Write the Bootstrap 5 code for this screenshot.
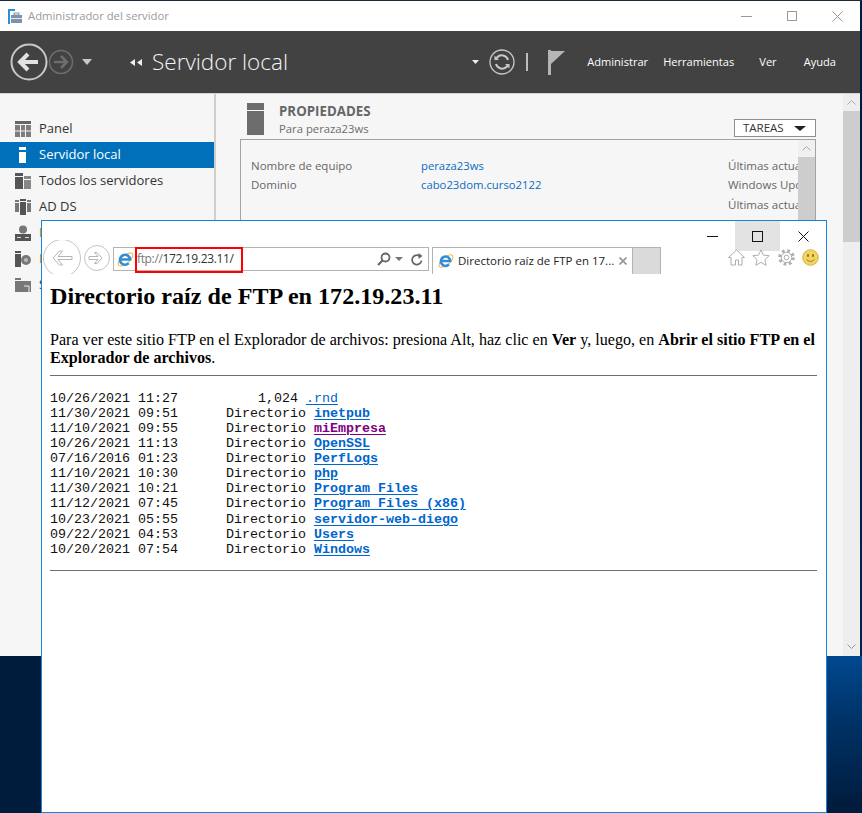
<!DOCTYPE html>
<html lang="es">
<head>
    <meta charset="UTF-8">
    <meta name="viewport" content="width=device-width, initial-scale=1.0">
    <title>Directorio raíz de FTP en 172.19.23.11</title>
    <link href="https://cdn.jsdelivr.net/npm/bootstrap@5.3.2/dist/css/bootstrap.min.css" rel="stylesheet">
    <style>
        html, body { height: 100%; }
        body { width: 862px; height: 813px; overflow: hidden; position: relative; font-family: "Open Sans", "Liberation Sans", sans-serif; background: linear-gradient(100deg, #001c3c 0%, #001c3c 88%, #00274f 100%); border-top: 1px solid #1c2a38; }
        .escritorio-luz { position: absolute; left: 827px; top: 655px; width: 35px; height: 158px; background: linear-gradient(180deg, #00498f 0%, #00356c 35%, #001a3a 100%); }

        /* ventana de atrás */
        .win-srv { position: absolute; left: 0; top: 0; width: 860px; height: 655px; background: #f6f6f6; }
        .srv-titulo { height: 30px; background: #fff; color: #9a9a9a; font-size: 11.3px; padding-left: 8px; gap: 6px; }
        .srv-ctrl { gap: 35px; padding-right: 17px; }
        .srv-barra { height: 62px; background: #424242; color: #fff; position: relative; }
        .srv-nav { padding-left: 10px; width: 130px; flex: none; }
        .srv-h { font-size: 22.5px; font-weight: 300; margin-left: 9px; color: #f5f5f5; }
        .srv-menu { font-size: 11.1px; color: #fff; padding-right: 24px; }
        .srv-menu span { white-space: nowrap; }
        .srv-main { height: 562px; border-top: 1px solid #d4d4d4; }
        .srv-lat { width: 216px; flex: none; padding-top: 22px; border-right: 2px solid #cfcfcf; }
        .srv-item { height: 26px; padding-left: 15px; gap: 8px; font-size: 13px; color: #333; padding-right: 2px; }
        .srv-item.activo { background: #0070bb; color: #fff; }
        .srv-naranja { color: #c8751a; }
        .srv-cont { padding: 0 27px 0 24px; min-width: 0; }
        .srv-cab { height: 45px; padding-left: 7px; }
        .srv-cab-txt { margin-left: 15px; padding-top: 8px; font-size: 11.3px; line-height: 18px; color: #6d6d6d; }
        .srv-cab-txt b { font-size: 13.3px; color: #666; display: block; }
        .srv-tareas { border: 1px solid #8f8f8f; width: 82px; height: 18px; font-size: 11.5px; color: #333; background: #fff; margin-top: 25px; padding: 0 9px 0 8px; }
        .flecha-neg { width: 0; height: 0; border-left: 6px solid transparent; border-right: 6px solid transparent; border-top: 5px solid #222; }
        .srv-panel { border: 1px solid #a3a3a3; border-bottom: 0; height: 517px; overflow: hidden; }
        .srv-props { padding: 16px 0 0 10px; font-size: 11.5px; line-height: 19.4px; color: #666; min-width: 0; }
        .srv-props a { color: #0b6cbf; text-decoration: none; font-size: 11.3px; }
        .srv-c1 { width: 170px; flex: none; }
        .srv-c2 { width: 307px; flex: none; }
        .srv-c3 { white-space: nowrap; overflow: hidden; flex: 1 1 0; min-width: 0; }
        .barra-v { width: 17px; flex: none; background: #f0f0f0; }
        .barra-btn { height: 17px; }
        .barra-thumb { background: #cdcdcd; }
        .barra-v.ext { background: #eeeeee; }
        .barra-v.ext .barra-hueco { height: 131px; }
        .barra-v.ext .barra-pie { padding-bottom: 3px; }

        /* ventana del explorador */
        .win-ie { position: absolute; left: 41px; top: 219px; width: 786px; height: 593px; background: #fff; border: 1px solid #1883d7; color: #000; }
        .ie-ctrl { height: 26px; flex: none; }
        .ie-ctrl-btn { width: 45px; height: 30px; }
        .ie-ctrl-btn.cerrar { width: 46px; }
        .ie-ctrl-btn.foco { background: #e3e3e3; }
        .ie-tool { height: 27px; flex: none; padding-right: 6px; position: relative; }
        .ie-nav { width: 71px; flex: none; height: 34px; margin-top: -7px; }
        .ie-nav svg { display: block; }
        .ie-dir { width: 316px; flex: none; height: 24px; border: 1px solid #b3b3b3; align-self: flex-start; padding-left: 3px; padding-right: 5px; }
        .ie-url { font-size: 12px; color: #777; margin-left: 3px; letter-spacing: -.35px; }
        .ie-url b { font-weight: 400; color: #333; }
        .ie-rojo { position: absolute; left: 93px; top: 0; width: 108px; height: 26px; border: 2px solid #f00; }
        .ie-tab { width: 201px; flex: none; height: 27px; border: 1px solid #b3b3b3; border-bottom: 0; margin-left: 3px; padding-left: 5px; padding-right: 5px; font-size: 11.5px; color: #222; white-space: nowrap; }
        .ie-tab-nueva { width: 28px; flex: none; height: 27px; background: #dadada; border: 1px solid #b3b3b3; border-left: 0; border-bottom: 0; }
        .ie-iconos { gap: 7.5px; padding-right: 1px; margin-top: 2px; }
        .ie-pag { padding: 0 9px 0 8px; font-family: "Liberation Serif", "Times New Roman", serif; }
        .ie-pag h1 { font-size: 24.12px; font-weight: 700; line-height: 28px; margin: 8px 0 21px; }
        .ie-pag p { font-size: 16.1px; line-height: 18px; margin: 0 0 8px; }
        .ie-pag hr { margin: 0; border: 0; border-top: 1px solid #6f6f6f; opacity: 1; }
        .ftp-lista { font-family: "Liberation Mono", "Courier New", monospace; font-size: 13.33px; line-height: 15px; margin: 15px 0 13px; color: #111; overflow: visible; }
        .ftp-ln { display: block; height: 15px; white-space: pre; }
        .ftp-ln.alto { margin-top: 1px; }
        .ftp-lista a { color: #0066cc; text-decoration: underline; text-underline-offset: 2px; }
        .ftp-lista a.dir { font-weight: 700; }
        .ftp-lista a.visto { color: #800080; }
    </style>
</head>
<body>

<div class="escritorio-luz"></div>

<!-- ADMINISTRADOR DEL SERVIDOR -->
<div class="win-srv d-flex flex-column">
    <div class="srv-titulo d-flex align-items-center flex-shrink-0">
        <svg width="14" height="15" viewBox="0 0 14 15"><rect x="0" y="0" width="7" height="2" fill="#2a8fdc"/><rect x="0" y="0" width="2" height="15" fill="#2a8fdc"/><rect x="3" y="6" width="11" height="8" fill="#7d94a8"/><rect x="6" y="4" width="5" height="2" fill="none" stroke="#7d94a8"/><rect x="3" y="9" width="11" height="1" fill="#dfe6ec"/></svg>
        <span>Administrador del servidor</span>
        <div class="srv-ctrl d-flex align-items-center ms-auto">
            <svg width="11" height="11" viewBox="0 0 11 11"><path d="M0 5.500h11" stroke="#999"/></svg>
            <svg width="10" height="10" viewBox="0 0 10 10"><rect x=".5" y=".5" width="9" height="9" fill="none" stroke="#999"/></svg>
            <svg width="11" height="11" viewBox="0 0 11 11"><path d="M.5.500l10 10M10.500.500l-10 10" stroke="#999"/></svg>
        </div>
    </div>

    <div class="srv-barra d-flex align-items-center flex-shrink-0">
        <div class="srv-nav d-flex align-items-center">
            <svg width="38" height="38" viewBox="0 0 38 38"><circle cx="19" cy="19" r="17.500" fill="none" stroke="#c8c8c8" stroke-width="2"/><path d="M28 19H11M18 11l-8 8 8 8" fill="none" stroke="#e2e2e2" stroke-width="4"/></svg>
            <svg width="26" height="26" viewBox="0 0 26 26"><circle cx="13" cy="13" r="11.500" fill="none" stroke="#6e6e6e" stroke-width="1.500"/><path d="M6 13h12M13 7l6 6-6 6" fill="none" stroke="#6e6e6e" stroke-width="2.500"/></svg>
            <svg class="ms-2" width="10" height="6" viewBox="0 0 10 6"><path d="M0 0h10L5 6z" fill="#c8c8c8"/></svg>
        </div>
        <svg width="13" height="7" viewBox="0 0 13 7"><path d="M5 0v7L0 3.500zM12 0v7L7 3.500z" fill="#eee"/></svg>
        <span class="srv-h">Servidor local</span>
        <div class="d-flex align-items-center ms-auto">
            <svg width="7" height="4" viewBox="0 0 7 4"><path d="M0 0h7L3.500 4z" fill="#eee"/></svg>
            <svg style="margin-left:10px" width="26" height="26" viewBox="0 0 26 26"><circle cx="13" cy="13" r="12" fill="none" stroke="#c9c9c9" stroke-width="1.300"/><path d="M19 11a6.500 6.500 0 0 0-11-2.500L6.500 10M7 15a6.500 6.500 0 0 0 11 2.500l1.500-1.500" fill="none" stroke="#c9c9c9" stroke-width="2"/><path d="M5.500 6.500v4.500h4.500zM20.500 19.500V15H16z" fill="#c9c9c9"/></svg>
            <svg style="margin-left:11px" width="2" height="18" viewBox="0 0 2 18"><rect width="2" height="18" fill="#bdbdbd"/></svg>
            <svg style="margin-left:20px" width="17" height="25" viewBox="0 0 17 25"><rect width="3" height="25" fill="#b5b5b5"/><path d="M3 1h14L3 14z" fill="#b5b5b5"/></svg>
            <div class="srv-menu d-flex align-items-center">
                <span style="margin-left:22px">Administrar</span>
                <span style="margin-left:15px">Herramientas</span>
                <span style="margin-left:25px">Ver</span>
                <span style="margin-left:27px">Ayuda</span>
            </div>
        </div>
    </div>

    <div class="srv-main d-flex flex-grow-1">
        <div class="srv-lat">
            <div class="srv-item d-flex align-items-center">
                <svg width="16" height="16" viewBox="0 0 16 16"><path fill="#666" d="M0 0h16v3H0z"/><path fill="#7d7d7d" d="M0 4h5v5.500H0zM6 4h4v5.500H6zM11 4h5v5.500h-5zM0 10.500h5V16H0zM6 10.500h4V16H6zM11 10.500h5V16h-5z"/></svg>
                <span>Panel</span>
            </div>
            <div class="srv-item activo d-flex align-items-center">
                <svg width="16" height="16" viewBox="0 0 16 16"><path fill="#fff" d="M4 0h7v3H4zM4 5h7v11H4z"/></svg>
                <span>Servidor local</span>
            </div>
            <div class="srv-item d-flex align-items-center">
                <svg width="16" height="16" viewBox="0 0 16 16"><path fill="#555" d="M0 0h8v3H0zM0 4h8v12H0z"/><path fill="#888" d="M9 3h7v3H9zM9 7h7v9H9z"/></svg>
                <span>Todos los servidores</span>
            </div>
            <div class="srv-item d-flex align-items-center">
                <svg width="16" height="16" viewBox="0 0 16 16"><path fill="#777" d="M0 1h4v2H0zM0 4h4v9H0zM12 1h4v2h-4zM12 4h4v9h-4z"/><path fill="#555" d="M5 0h6v2H5zM5 3h6v13H5z"/></svg>
                <span>AD DS</span>
            </div>
            <div class="srv-item d-flex align-items-center">
                <svg width="16" height="16" viewBox="0 0 16 16"><circle cx="8" cy="4.500" r="4" fill="#777"/><path fill="#555" d="M0 9h16v7H0z"/><path fill="#ddd" d="M2 12h4v1H2zM10 12h4v1h-4z"/></svg>
                <span class="srv-naranja">DNS</span>
            </div>
            <div class="srv-item d-flex align-items-center">
                <svg width="16" height="16" viewBox="0 0 16 16"><path fill="#555" d="M0 0h6v2H0zM0 3h6v13H0z"/><circle cx="11" cy="9" r="5" fill="#777"/><circle cx="11" cy="9" r="2" fill="#bbb"/></svg>
                <span class="srv-naranja">IIS</span>
            </div>
            <div class="srv-item d-flex align-items-center">
                <svg width="16" height="16" viewBox="0 0 16 16"><path fill="#777" d="M0 1h6v2H0zM0 4h16v11H0z"/><path fill="none" stroke="#eee" d="M9 9h5v6"/></svg>
                <span>Servicios</span>
            </div>
        </div>

        <div class="srv-cont flex-grow-1 d-flex flex-column">
            <div class="srv-cab d-flex align-items-start flex-shrink-0">
                <svg class="flex-shrink-0" style="margin-top:9px" width="17" height="32" viewBox="0 0 17 32"><rect width="17" height="7" fill="#6d6d6d"/><rect y="8" width="17" height="24" fill="#6d6d6d"/></svg>
                <div class="srv-cab-txt"><b>PROPIEDADES</b>Para peraza23ws</div>
                <div class="srv-tareas d-flex align-items-center justify-content-between ms-auto">
                    <span>TAREAS</span><i class="flecha-neg"></i>
                </div>
            </div>
            <div class="srv-panel d-flex flex-grow-1">
                <div class="srv-props flex-grow-1">
                    <div class="d-flex"><div class="srv-c1">Nombre de equipo</div><div class="srv-c2"><a href="#">peraza23ws</a></div><div class="srv-c3">Últimas actualizaciones</div></div>
                    <div class="d-flex"><div class="srv-c1">Dominio</div><div class="srv-c2"><a href="#">cabo23dom.curso2122</a></div><div class="srv-c3">Windows Update</div></div>
                    <div class="d-flex"><div class="srv-c1">&nbsp;</div><div class="srv-c2"></div><div class="srv-c3">Últimas actualizaciones</div></div>
                </div>
                <div class="barra-v d-flex flex-column">
                    <div class="barra-btn d-flex align-items-center justify-content-center"><svg width="9" height="5" viewBox="0 0 9 5"><path d="M.5 4.500l4-4 4 4" fill="none" stroke="#aaa"/></svg></div>
                    <div class="barra-thumb flex-grow-1"></div>
                </div>
            </div>
        </div>

        <div class="barra-v ext d-flex flex-column">
            <div class="barra-btn d-flex align-items-center justify-content-center"><svg width="9" height="5" viewBox="0 0 9 5"><path d="M.5 4.500l4-4 4 4" fill="none" stroke="#aaa"/></svg></div>
            <div class="barra-thumb barra-hueco"></div>
            <div class="barra-pie mt-auto d-flex align-items-center justify-content-center barra-btn"><svg width="9" height="5" viewBox="0 0 9 5"><path d="M.5.500l4 4 4-4" fill="none" stroke="#999"/></svg></div>
        </div>
    </div>
</div>

<!-- INTERNET EXPLORER -->
<div class="win-ie d-flex flex-column">
    <div class="ie-ctrl d-flex justify-content-end">
        <div class="ie-ctrl-btn d-flex align-items-center justify-content-center"><svg width="11" height="11" viewBox="0 0 11 11"><path d="M0 5.500h11" stroke="#111"/></svg></div>
        <div class="ie-ctrl-btn foco d-flex align-items-center justify-content-center"><svg width="11" height="11" viewBox="0 0 11 11"><rect x=".5" y=".5" width="10" height="10" fill="none" stroke="#111"/></svg></div>
        <div class="ie-ctrl-btn cerrar d-flex align-items-center justify-content-center"><svg width="11" height="11" viewBox="0 0 11 11"><path d="M.5.500l10 10M10.500.500l-10 10" stroke="#111"/></svg></div>
    </div>

    <div class="ie-tool d-flex align-items-start">
        <div class="ie-nav flex-shrink-0">
            <svg width="71" height="34" viewBox="0 0 71 34"><circle cx="20" cy="18" r="18.500" fill="#fff" stroke="#c4c4c4"/><path d="M30 16.500H16l4.500-5.500h-3L11 18l6.500 7h3L16 19.500h14z" fill="#fff" stroke="#b5b5b5"/><circle cx="55" cy="18" r="12.500" fill="#fff" stroke="#c4c4c4"/><path d="M47 16.500h9l-3.500-4h2.500l5 5.500-5 5.500h-2.500l3.500-4h-9z" fill="#fff" stroke="#b5b5b5"/></svg>
        </div>
        <div class="ie-dir d-flex align-items-center">
            <svg class="flex-shrink-0" width="17" height="17" viewBox="0 0 17 17"><ellipse cx="8.500" cy="8.500" rx="9" ry="4" transform="rotate(-40 8.500 8.500)" fill="none" stroke="#f1b52c"/><path d="M3.500 8.500h10a5 5 0 1 0-1.300 3.600" transform="translate(-.5 0)" fill="none" stroke="#2f8fdc" stroke-width="2.600"/></svg>
            <span class="ie-url">ftp://<b>172.19.23.11/</b></span>
            <svg class="ms-auto" width="14" height="14" viewBox="0 0 14 14"><circle cx="8.500" cy="5.500" r="4" fill="none" stroke="#666" stroke-width="1.800"/><path d="M5.500 8.500L1 13" stroke="#666" stroke-width="2.200"/></svg>
            <svg class="ms-1" width="8" height="4" viewBox="0 0 8 4"><path d="M0 0h8L4 4z" fill="#777"/></svg>
            <svg class="ms-2" width="12" height="13" viewBox="0 0 12 13"><path d="M10.500 7.500A4.700 4.700 0 1 1 8.500 3" fill="none" stroke="#666" stroke-width="1.700"/><path d="M7.500 0v6l4-3z" fill="#666"/></svg>
        </div>
        <div class="ie-tab d-flex align-items-center">
            <svg class="flex-shrink-0 me-1" width="16" height="16" viewBox="0 0 17 17"><ellipse cx="8.500" cy="8.500" rx="9" ry="4" transform="rotate(-40 8.500 8.500)" fill="none" stroke="#f1b52c"/><path d="M3.500 8.500h10a5 5 0 1 0-1.300 3.600" transform="translate(-.5 0)" fill="none" stroke="#2f8fdc" stroke-width="2.600"/></svg>
            <span>Directorio raíz de FTP en 17...</span>
            <svg class="ms-auto flex-shrink-0" width="8" height="8" viewBox="0 0 8 8"><path d="M.5.500l7 7M7.500.500l-7 7" stroke="#9a9a9a" stroke-width="1.800"/></svg>
        </div>
        <div class="ie-tab-nueva"></div>
        <div class="ie-iconos d-flex align-items-start ms-auto">
            <svg width="17" height="17" viewBox="0 0 17 17"><path d="M.5 8.500L8.500 1l8 7.500h-2.500V16h-3.500v-5h-3v5H3V8.500z" fill="#fff" stroke="#aeaeae"/></svg>
            <svg width="18" height="17" viewBox="0 0 18 17"><path d="M9 .8l2.400 5.300 5.800.6-4.300 3.900 1.200 5.700L9 13.400l-5.100 2.900 1.200-5.700L.8 6.700l5.800-.6z" fill="#fff" stroke="#aeaeae"/></svg>
            <svg width="17" height="17" viewBox="0 0 17 17"><circle cx="8.500" cy="8.500" r="6.500" fill="none" stroke="#aeaeae" stroke-width="3.600" stroke-dasharray="2.500 2.600"/><circle cx="8.500" cy="8.500" r="5.200" fill="#fff" stroke="#aeaeae"/><circle cx="8.500" cy="8.500" r="2.300" fill="#fff" stroke="#aeaeae"/></svg>
            <svg width="17" height="17" viewBox="0 0 17 17"><circle cx="8.500" cy="8.500" r="7.800" fill="#f4d35e" stroke="#d3b54a"/><ellipse cx="6" cy="6.500" rx="1" ry="1.700" fill="#8a7a30"/><ellipse cx="11" cy="6.500" rx="1" ry="1.700" fill="#8a7a30"/><path d="M4.500 10.500c2 2.500 6 2.500 8 0" fill="none" stroke="#8a7a30"/></svg>
        </div>
        <div class="ie-rojo"></div>
    </div>

    <div class="ie-pag flex-grow-1">
        <h1>Directorio raíz de FTP en 172.19.23.11</h1>
        <p>Para ver este sitio FTP en el Explorador de archivos: presiona Alt, haz clic en <b>Ver</b> y, luego, en <b>Abrir el sitio FTP en el Explorador de archivos</b>.</p>
        <hr>
        <pre class="ftp-lista"><span class="ftp-ln">10/26/2021 11:27          1,024 <a href="#">.rnd</a></span><span class="ftp-ln">11/30/2021 09:51      Directorio <a class="dir" href="#">inetpub</a></span><span class="ftp-ln">11/10/2021 09:55      Directorio <a class="dir visto" href="#">miEmpresa</a></span><span class="ftp-ln">10/26/2021 11:13      Directorio <a class="dir" href="#">OpenSSL</a></span><span class="ftp-ln">07/16/2016 01:23      Directorio <a class="dir" href="#">PerfLogs</a></span><span class="ftp-ln">11/10/2021 10:30      Directorio <a class="dir" href="#">php</a></span><span class="ftp-ln">11/30/2021 10:21      Directorio <a class="dir" href="#">Program Files</a></span><span class="ftp-ln">11/12/2021 07:45      Directorio <a class="dir" href="#">Program Files (x86)</a></span><span class="ftp-ln alto">10/23/2021 05:55      Directorio <a class="dir" href="#">servidor-web-diego</a></span><span class="ftp-ln">09/22/2021 04:53      Directorio <a class="dir" href="#">Users</a></span><span class="ftp-ln">10/20/2021 07:54      Directorio <a class="dir" href="#">Windows</a></span></pre>
        <hr>
    </div>
</div>

<script src="https://cdn.jsdelivr.net/npm/bootstrap@5.3.2/dist/js/bootstrap.bundle.min.js"></script>
</body>
</html>
